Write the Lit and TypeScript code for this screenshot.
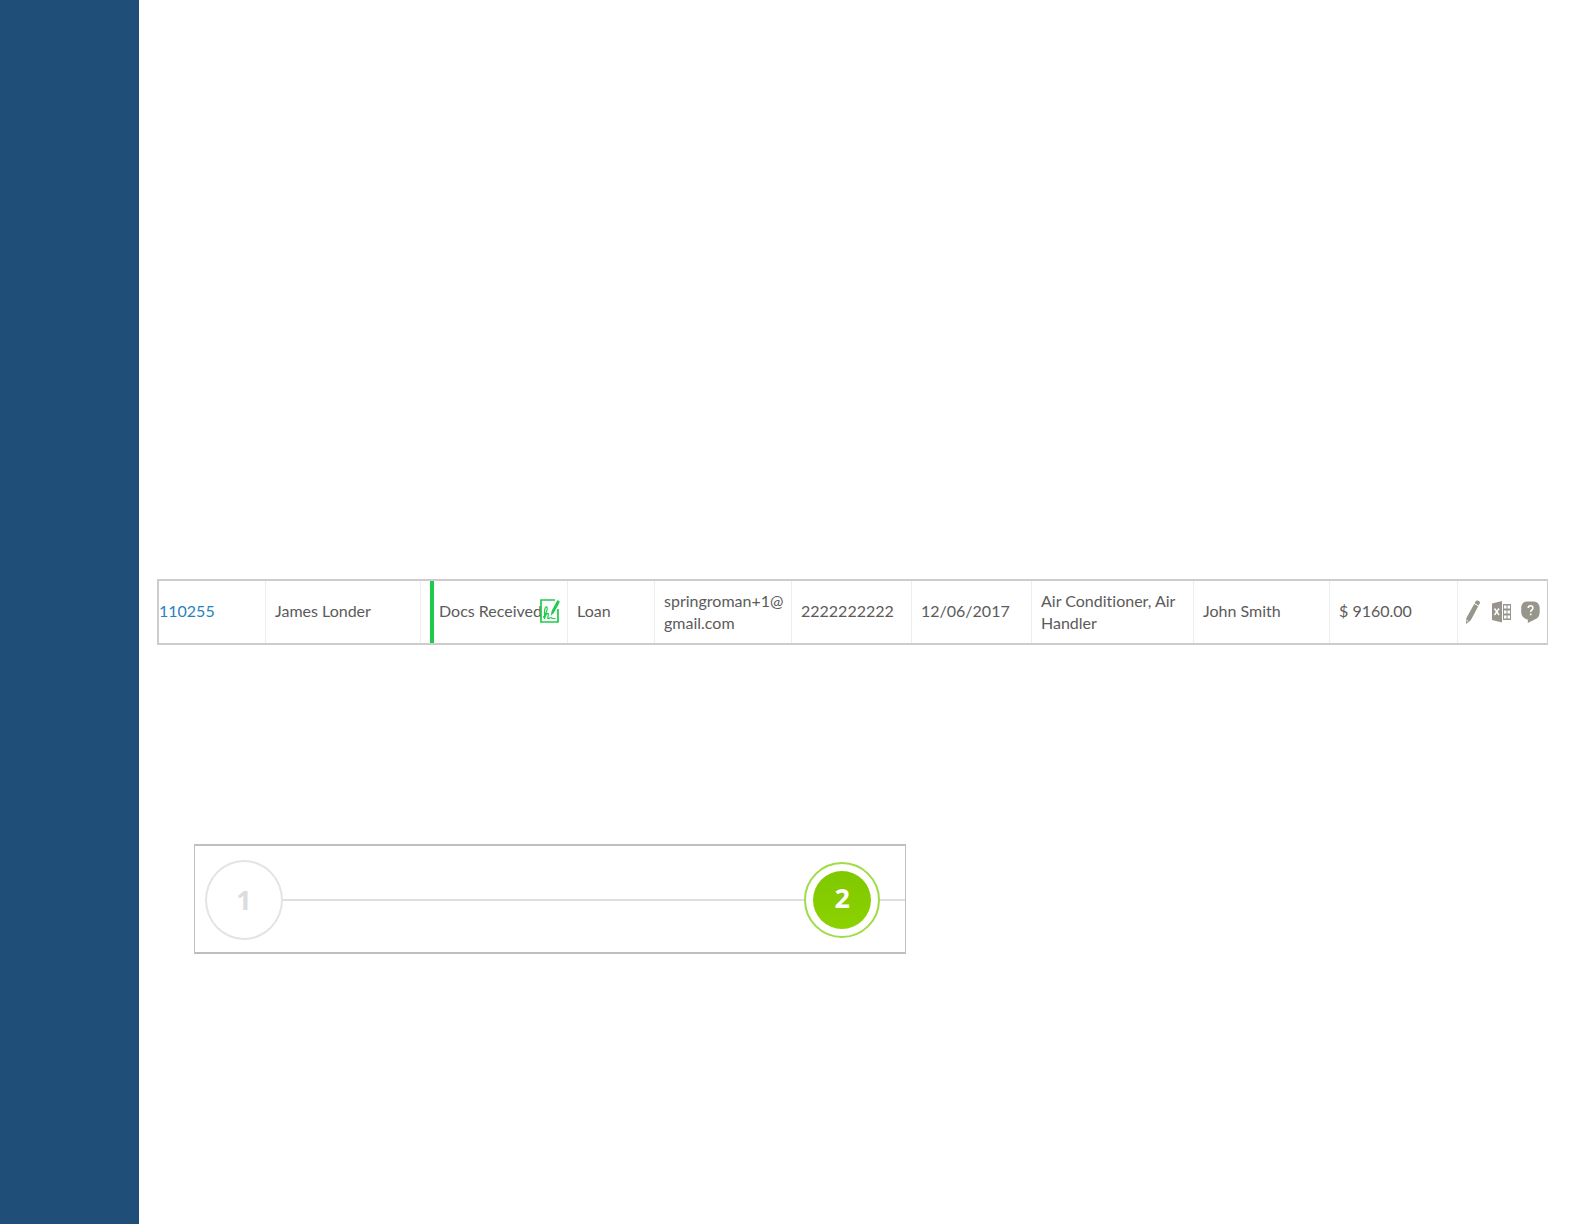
import { LitElement, css, html } from "lit";
import { customElement, property } from "lit/decorators.js";

interface Application {
  id: string;
  customer: string;
  status: string;
  type: string;
  email: [string, string];
  phone: string;
  date: string;
  equipment: string;
  agent: string;
  amount: string;
}

// Relative column shares; the last one holds the row actions.
const columns = [107, 155, 147, 87, 137, 120, 120, 162, 136, 128, 89];
const total = columns.reduce((sum, share) => sum + share, 0);

const applications: Application[] = [
  {
    id: "110255",
    customer: "James Londer",
    status: "Docs Received",
    type: "Loan",
    email: ["springroman+1@", "gmail.com"],
    phone: "2222222222",
    date: "12/06/2017",
    equipment: "Air Conditioner, Air Handler",
    agent: "John Smith",
    amount: "$ 9160.00",
  },
];

const signedIcon = html`<svg class="signed" viewBox="0 0 20 24" role="img" aria-label="Signed">
  <path d="M15 1H1v22h17V10" fill="none" stroke="#1fcb4a" stroke-width="1.7" />
  <path d="M17.5 1l2.300 1.400-1.300 3-4.500 8-3.200 3.600.8-5z" fill="#1fcb4a" />
  <path
    d="M3.500 18c2-2 4.500-8 3.500-10-1.500-1-2.500 2-2.500 5v6.500c1-3 2.500-6 3.700-5 1 1-1.500 5 0 5s1.500-1 2.500-1 1 1 2 1h2.300"
    fill="none"
    stroke="#1fcb4a"
    stroke-width="1.2"
    stroke-linecap="round"
    stroke-linejoin="round"
  />
</svg>`;

const pencilIcon = html`<svg class="icon" viewBox="0 0 20 24" aria-hidden="true">
  <path
    d="M12.6 1.500c.6-1 1.500-1.300 2.300-.9l1.300.7c.8.5 1 1.300.5 2.300l-1 1.900-4-2.200zM11.200 4.100l4 2.200-7.400 14-4.400 3.400-.4-.3.400-5.300z"
    fill="#98968c"
  />
  <path d="M4 20l-.1 1.700 1.500-1z" fill="#fff" />
</svg>`;

const sheetIcon = html`<svg class="icon" viewBox="0 0 20 24" aria-hidden="true">
  <path d="M0 3.500L10 1v21.500L0 20z" fill="#98968c" />
  <path d="M2.500 8.500l4.500 6.500M7 8.500L2.500 15" stroke="#fff" stroke-width="1.4" />
  <path d="M11 4h8v16h-8z" fill="#98968c" />
  <path
    d="M12 5.500h2.500v3H12zM15.500 5.500H18v3h-2.500zM12 10.500h2.500v3H12zM15.500 10.500H18v3h-2.500zM12 15.500h2.500v3H12zM15.500 15.500H18v3h-2.500z"
    fill="#fff"
  />
</svg>`;

const helpIcon = html`<svg class="icon" viewBox="0 0 20 24" aria-hidden="true">
  <path
    d="M6 1.500h7c3.500 0 5.700 3 5.700 6.500v4c0 4-2 6.500-5 7.500L6.800 23v-3.500C2.500 18.500.2 16 .2 12V8C.2 4.500 2.500 1.500 6 1.500z"
    fill="#98968c"
  />
  <path
    d="M7.200 8c0-1.500 1-2.300 2.300-2.300s2.400.8 2.400 2.200c0 2-2.200 2-2.200 4.200M9.700 13.500v1.700"
    fill="none"
    stroke="#fff"
    stroke-width="1.6"
  />
</svg>`;

@customElement("application-table")
export class ApplicationTable extends LitElement {
  @property({ attribute: false }) rows: Application[] = [];

  static styles = css`
    :host {
      display: block;
    }
    .table {
      box-sizing: border-box;
      width: 100%;
      table-layout: fixed;
      border-collapse: separate;
      border-spacing: 0;
      border: 2px solid #cccccc;
      border-right-width: 1px;
      background: #fff;
      color: #5c5a5a;
      font-size: 16px;
      line-height: 22px;
      font-variant-ligatures: none;
    }
    .cell {
      height: 62px;
      box-sizing: border-box;
      padding: 0 8px 2px 9px;
      border-right: 1px solid #ededed;
      vertical-align: middle;
      text-align: left;
    }
    .multiline {
      padding-bottom: 0;
    }
    .id {
      padding-left: 0;
    }
    .status {
      padding-left: 18px;
      padding-right: 0;
      background: linear-gradient(#1fcb4a, #1fcb4a) 9px 0 / 4px 100% no-repeat;
      white-space: nowrap;
    }
    .actions {
      padding: 0 0 0 5px;
      border-right: 0;
    }
    .link {
      color: #2a82bd;
      text-decoration: none;
    }
    .state,
    .tools {
      display: flex;
      align-items: center;
    }
    .tools {
      gap: 9px;
    }
    .tool {
      flex: none;
      padding: 0;
      border: 0;
      background: none;
      cursor: pointer;
    }
    .icon,
    .signed {
      display: block;
      flex: none;
      width: 20px;
      height: 24px;
    }
    .signed {
      margin-left: -2px;
    }
  `;

  render() {
    return html`<table class="table" aria-label="Applications">
      <colgroup>
        ${columns.map((share) => html`<col style="width:${(share / total) * 100}%" />`)}
      </colgroup>
      <tbody>
        ${this.rows.map(
          (row) => html`<tr>
            <td class="cell id"><a class="link" href="#${row.id}">${row.id}</a></td>
            <td class="cell">${row.customer}</td>
            <td class="cell status">
              <div class="state"><span>${row.status}</span>${signedIcon}</div>
            </td>
            <td class="cell">${row.type}</td>
            <td class="cell multiline">${row.email[0]}<wbr />${row.email[1]}</td>
            <td class="cell">${row.phone}</td>
            <td class="cell">${row.date}</td>
            <td class="cell multiline">${row.equipment}</td>
            <td class="cell">${row.agent}</td>
            <td class="cell">${row.amount}</td>
            <td class="cell actions">
              <div class="tools">
                <button class="tool" type="button" aria-label="Edit">${pencilIcon}</button>
                <button class="tool" type="button" aria-label="Export">${sheetIcon}</button>
                <button class="tool" type="button" aria-label="Help">${helpIcon}</button>
              </div>
            </td>
          </tr>`
        )}
      </tbody>
    </table>`;
  }
}

@customElement("progress-steps")
export class ProgressSteps extends LitElement {
  static styles = css`
    :host {
      display: block;
    }
    .steps {
      display: flex;
      align-items: center;
      box-sizing: border-box;
      height: 110px;
      margin: 0;
      padding: 2px 0 0 10px;
      border: 1px solid #bfbfbf;
      border-width: 2px 1px;
      list-style: none;
      font-family: "Open Sans", "Noto Sans", sans-serif;
      font-size: 27px;
      font-weight: 700;
      line-height: 32px;
    }
    .step {
      display: flex;
      align-items: center;
    }
    .first {
      flex: 1;
    }
    .circle {
      display: flex;
      flex: none;
      align-items: center;
      justify-content: center;
      box-sizing: border-box;
      width: 78px;
      height: 80px;
      border: 2px solid #e4e4e4;
      border-radius: 50%;
      color: #dcdcdc;
    }
    .ring {
      box-sizing: border-box;
      width: 76px;
      height: 76px;
      padding: 7px;
      border: 2px solid #a0dc46;
      border-radius: 50%;
    }
    .disc {
      display: flex;
      align-items: center;
      justify-content: center;
      box-sizing: border-box;
      height: 100%;
      padding-bottom: 4px;
      border-radius: 50%;
      background: linear-gradient(#7fc800, #8cd200);
      color: #fff;
    }
    .line {
      flex: 1;
      height: 2px;
      background: #e0e0e0;
    }
    .tail {
      flex: none;
      width: 25px;
    }
  `;

  render() {
    return html`<ol class="steps">
      <li class="step first">
        <span class="circle">1</span>
        <span class="line"></span>
      </li>
      <li class="step" aria-current="step">
        <span class="ring"><span class="disc">2</span></span>
        <span class="line tail"></span>
      </li>
    </ol>`;
  }
}

@customElement("app-root")
export class AppRoot extends LitElement {
  static styles = css`
    :host {
      display: flex;
      min-height: 100vh;
      background: #fff;
      font-family: Lato, "Liberation Sans", sans-serif;
    }
    .sidebar {
      flex: none;
      width: 139px;
      background: #1f4e79;
    }
    .main {
      flex: 1;
      min-width: 0;
      padding: 579px 36px 0 18px;
    }
    .progress {
      width: 51.2%;
      margin: 199px 0 0 37px;
    }
  `;

  render() {
    return html`<aside class="sidebar"></aside>
      <main class="main">
        <application-table .rows=${applications}></application-table>
        <progress-steps class="progress"></progress-steps>
      </main>`;
  }
}
